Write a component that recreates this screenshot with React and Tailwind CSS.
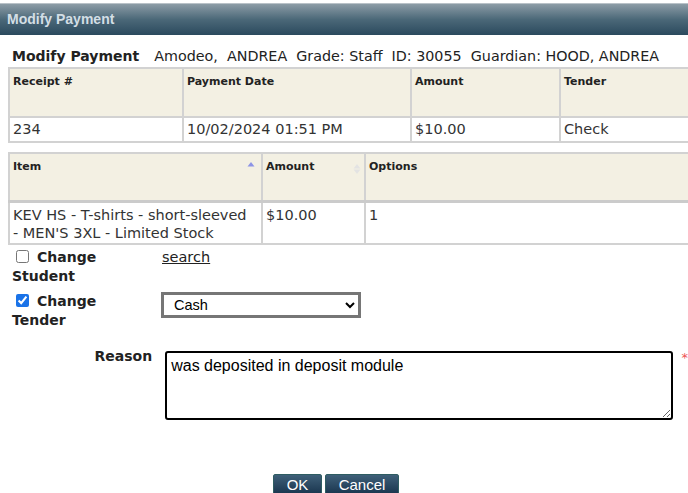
import React, { useState } from "react";

const verdana = { fontFamily: '"DejaVu Sans", Verdana, sans-serif' };
const arial = { fontFamily: '"Liberation Sans", Arial, sans-serif' };

const SortIcon = ({ up }) => (
  <svg width="8" height="12" viewBox="0 0 8 12" className="shrink-0">
    <path d="M4 1 L7.5 5.5 L0.5 5.5 Z" fill={up ? "#8d94e6" : "#e3e3e3"} />
    {!up && <path d="M4 11 L7.5 6.5 L0.5 6.5 Z" fill="#e3e3e3" />}
  </svg>
);

export default function App() {
  const [changeStudent, setChangeStudent] = useState(false);
  const [changeTender, setChangeTender] = useState(true);
  const [tender, setTender] = useState("Cash");
  const [reason, setReason] = useState("was deposited in deposit module");

  return (
    <div className="w-[688px] h-[493px] overflow-hidden bg-white text-[#333]" style={verdana}>
      <div className="h-[3px] bg-white" />
      <div className="h-[32px] border-t border-[#b9c2c8] bg-gradient-to-b from-[#8c9ca6] via-[#4b6878] to-[#2b4a5e] flex items-center px-[7px]">
        <span className="text-[14px] font-bold text-[#d3dee5]" style={arial}>
          Modify Payment
        </span>
      </div>

      <div className="w-[760px]">
        <div className="flex items-baseline gap-[15px] pl-[12px] pt-[11px] h-[32px] text-[#222]">
          <span className="font-bold text-[14px]">Modify Payment</span>
          <span className="text-[14.3px]">Amodeo,&nbsp; ANDREA&nbsp; Grade: Staff&nbsp; ID: 30055&nbsp; Guardian: HOOD, ANDREA</span>
        </div>

        <table className="ml-[8px] border-collapse w-[752px] text-[14.5px]">
          <thead>
            <tr className="bg-[#f3f0e3] h-[49px] align-top">
              <th className="w-[174px] border-2 border-[#d2d2d2] text-left font-bold text-[11px] text-[#222] px-[3px] pt-[5px]">Receipt #</th>
              <th className="w-[228px] border-2 border-[#d2d2d2] text-left font-bold text-[11px] text-[#222] px-[3px] pt-[5px]">Payment Date</th>
              <th className="w-[149px] border-2 border-[#d2d2d2] text-left font-bold text-[11px] text-[#222] px-[3px] pt-[5px]">Amount</th>
              <th className="border-2 border-[#d2d2d2] text-left font-bold text-[11px] text-[#222] px-[3px] pt-[5px]">Tender</th>
            </tr>
          </thead>
          <tbody>
            <tr className="h-[25px]">
              <td className="border-2 border-[#d2d2d2] px-[3px]">234</td>
              <td className="border-2 border-[#d2d2d2] px-[3px]">10/02/2024 01:51 PM</td>
              <td className="border-2 border-[#d2d2d2] px-[3px]">$10.00</td>
              <td className="border-2 border-[#d2d2d2] px-[3px]">Check</td>
            </tr>
          </tbody>
        </table>

        <table className="ml-[8px] mt-[9px] border-collapse w-[700px] text-[14.5px]">
          <thead>
            <tr className="bg-[#f3f0e3] h-[48px] align-top">
              <th className="w-[253px] border-2 border-[#d2d2d2] border-b-[3px] border-b-[#cbcbcb] text-left font-bold text-[11px] text-[#222] pl-[3px] pr-[6px] pt-[5px]">
                <div className="flex justify-between items-center">
                  <span>Item</span>
                  <SortIcon up />
                </div>
              </th>
              <th className="w-[103px] border-2 border-[#d2d2d2] border-b-[3px] border-b-[#cbcbcb] text-left font-bold text-[11px] text-[#222] px-[3px] pt-[5px]">
                <div className="flex justify-between items-center">
                  <span>Amount</span>
                  <span className="mt-[4px]"><SortIcon /></span>
                </div>
              </th>
              <th className="border-2 border-[#d2d2d2] border-b-[3px] border-b-[#cbcbcb] text-left font-bold text-[11px] text-[#222] px-[3px] pt-[5px]">
                <div className="flex justify-between items-center">
                  <span>Options</span>
                  <span className="mt-[4px]"><SortIcon /></span>
                </div>
              </th>
            </tr>
          </thead>
          <tbody>
            <tr className="h-[43px] align-top">
              <td className="border-2 border-[#d2d2d2] pl-[3px] pr-[12px] pt-[3px] leading-[18px]">
                KEV HS - T-shirts - short-sleeved - MEN'S 3XL - Limited Stock
              </td>
              <td className="border-2 border-[#d2d2d2] px-[3px] pt-[3px] leading-[18px]">$10.00</td>
              <td className="border-2 border-[#d2d2d2] px-[3px] pt-[3px] leading-[18px]">1</td>
            </tr>
          </tbody>
        </table>
      </div>

      <div className="flex pl-[12px] pt-[3px]">
        <label className="w-[150px] font-bold text-[14px] text-[#222] leading-[19px]">
          <span className="block w-[110px]">
            <input
              type="checkbox"
              checked={changeStudent}
              onChange={(e) => setChangeStudent(e.target.checked)}
              className="w-[13px] h-[13px] ml-[4px] mr-[8px] align-[-1px] accent-[#1a73e8]"
            />
            Change Student
          </span>
        </label>
        <a href="#" className="text-[14.5px] text-[#222] underline leading-[19px]">
          search
        </a>
      </div>

      <div className="flex pl-[12px] pt-[6px]">
        <label className="w-[149px] font-bold text-[14px] text-[#222] leading-[19px]">
          <span className="block w-[110px]">
            <input
              type="checkbox"
              checked={changeTender}
              onChange={(e) => setChangeTender(e.target.checked)}
              className="w-[13px] h-[13px] ml-[4px] mr-[8px] align-[-1px] accent-[#1a73e8]"
            />
            Change Tender
          </span>
        </label>
        <select
          value={tender}
          onChange={(e) => setTender(e.target.value)}
          className="w-[200px] h-[26px] border-[3px] border-[#767676] bg-white text-[14.5px] text-black pl-[6px]"
          style={arial}
        >
          <option>Cash</option>
          <option>Check</option>
          <option>Credit Card</option>
        </select>
      </div>

      <div className="flex pt-[21px]">
        <div className="w-[153px] text-right font-bold text-[14px] text-[#222] -mt-[5px]">Reason</div>
        <textarea
          value={reason}
          onChange={(e) => setReason(e.target.value)}
          className="ml-[13px] w-[510px] h-[69px] border-2 border-black rounded-[3px] text-[16px] text-black px-[4px] py-[1px] resize"
          style={arial}
        />
        <span className="ml-[9px] text-[#e55] text-[13px] -mt-[3px]">*</span>
      </div>

      <div className="flex justify-center gap-[3px] pt-[54px] pr-[16px]" style={arial}>
        <button className="w-[49px] h-[24px] rounded-[2px] border border-[#2f5d62] bg-gradient-to-b from-[#3f6079] to-[#142f48] text-white text-[15px] leading-none pb-[3px]">
          OK
        </button>
        <button className="w-[74px] h-[24px] rounded-[2px] border border-[#2f5d62] bg-gradient-to-b from-[#3f6079] to-[#142f48] text-white text-[15px] leading-none pb-[3px]">
          Cancel
        </button>
      </div>
    </div>
  );
}
